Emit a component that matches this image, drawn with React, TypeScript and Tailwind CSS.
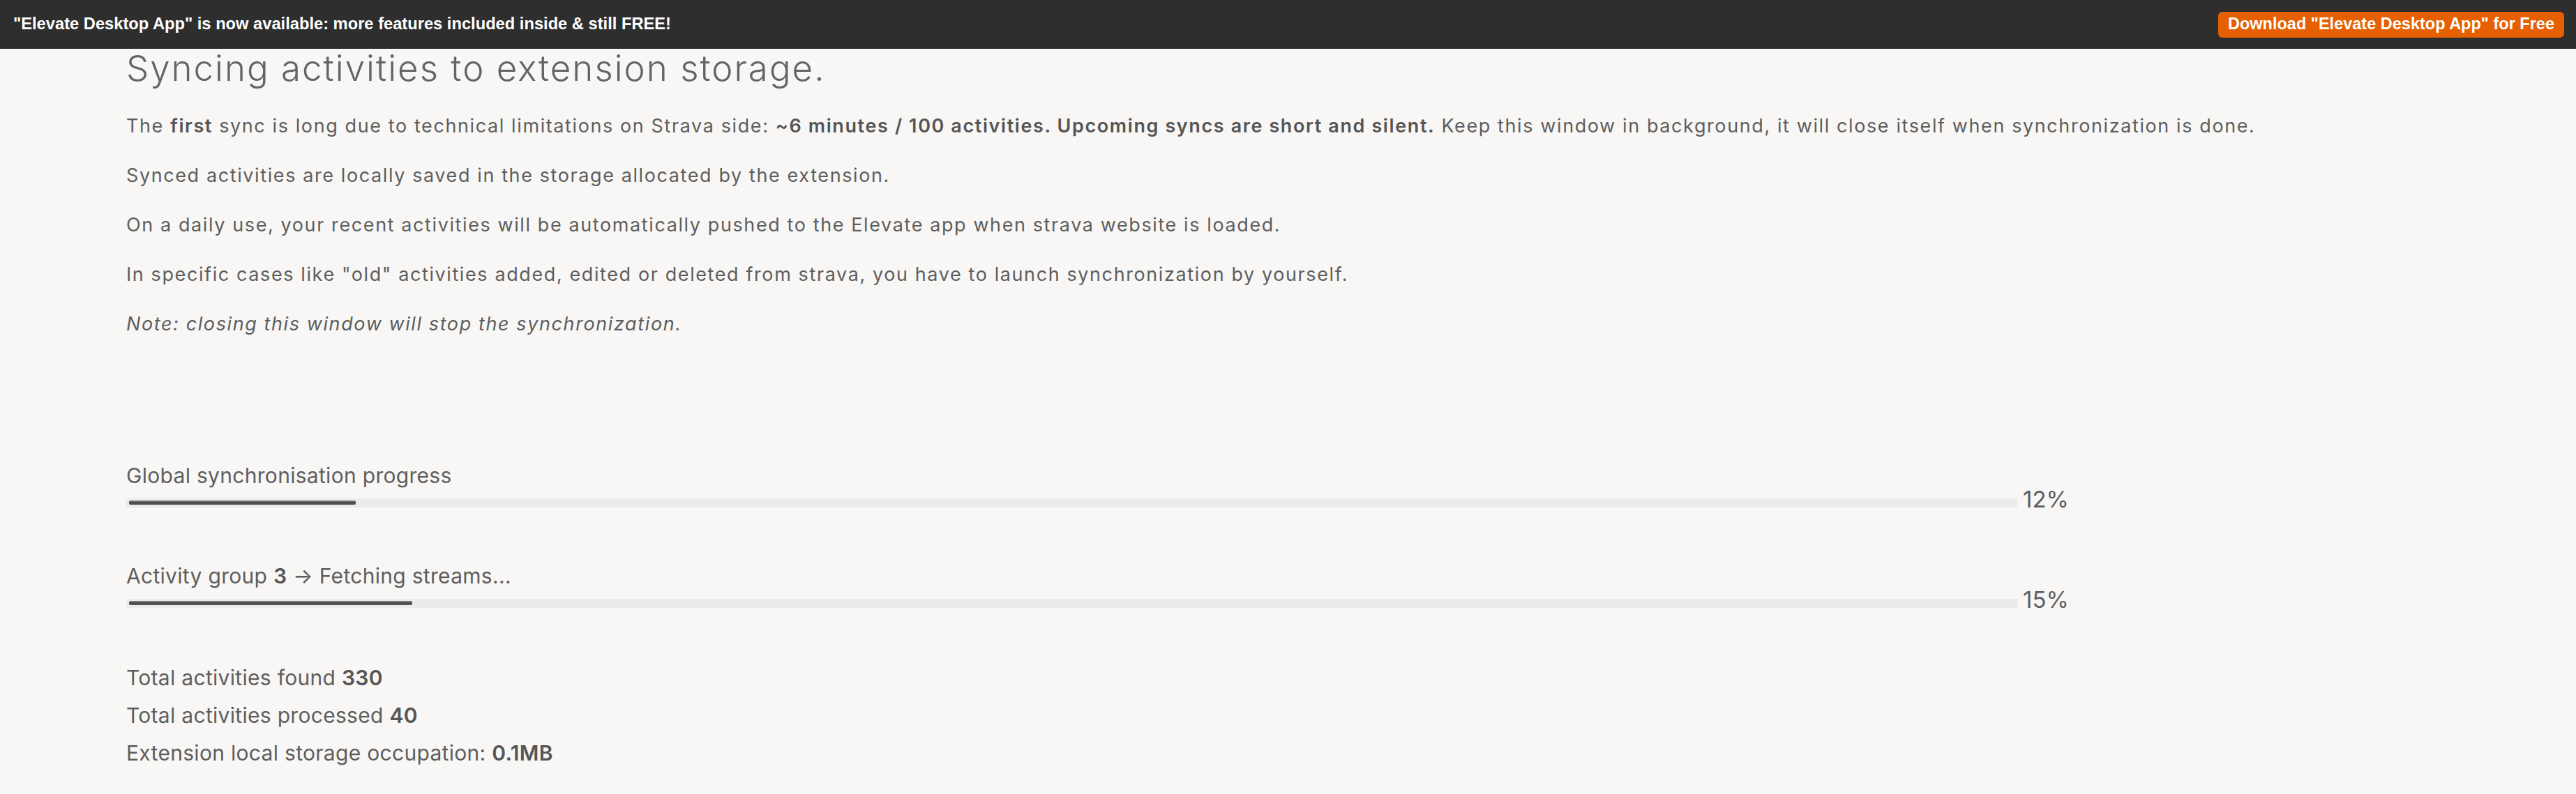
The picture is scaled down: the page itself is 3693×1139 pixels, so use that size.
const intro = [
  'Synced activities are locally saved in the storage allocated by the extension.',
  'On a daily use, your recent activities will be automatically pushed to the Elevate app when strava website is loaded.',
  'In specific cases like "old" activities added, edited or deleted from strava, you have to launch synchronization by yourself.',
];

function ProgressRow({ label, percent }: { label: React.ReactNode; percent: number }) {
  return (
    <div>
      <div className="text-[30px] leading-none tracking-[0.3px] text-[#5e5e5e]">{label}</div>
      <div className="mt-[18px] flex items-start">
        <div className="h-[13px] w-[2711px] bg-[#ebebeb] pl-[4px] pt-[3px]">
          <div
            className="h-[6px] rounded-[2px] bg-linear-to-b from-[#8a8a8a] via-[#474747] to-[#5c5c5c]"
            style={{ width: `${(percent / 100) * 2707}px` }}
          />
        </div>
        <span className="ml-[8px] mt-[-15px] text-[33px] leading-none text-[#5e5e5e]">{percent}%</span>
      </div>
    </div>
  );
}

export default function App() {
  return (
    <div className="min-h-screen bg-[#f8f7f5] font-['Inter',sans-serif]">
      <div className="flex h-[70px] items-center justify-between bg-[#2e2e2e] pl-[19px] pr-[17px] font-['Liberation_Sans',Arial,sans-serif]">
        <span className="text-[23.7px] font-bold text-white">
          "Elevate Desktop App" is now available: more features included inside &amp; still FREE!
        </span>
        <button className="h-[37px] rounded-[6px] bg-[#e65f00] px-[14px] text-[23.5px] font-bold text-white">
          Download "Elevate Desktop App" for Free
        </button>
      </div>

      <div className="pl-[181px]">
        <h1 className="mt-[2px] text-[51px] font-light leading-none tracking-[2px] text-[#646464]">
          Syncing activities to extension storage.
        </h1>

        <div className="mt-[22px] text-[27px] leading-[71px] tracking-[1.6px] text-[#5e5e5e]">
          <p>
            The <b className="font-semibold text-[#555]">first</b> sync is long due to technical limitations on Strava side:{' '}
            <b className="font-semibold text-[#555]">~6 minutes / 100 activities. Upcoming syncs are short and silent.</b> Keep
            this window in background, it will close itself when synchronization is done.
          </p>
          {intro.map((t) => (
            <p key={t}>{t}</p>
          ))}
          <p className="italic">Note: closing this window will stop the synchronization.</p>
        </div>

        <div className="mt-[167px]">
          <ProgressRow label="Global synchronisation progress" percent={12} />
        </div>
        <div className="mt-[78px]">
          <ProgressRow
            label={
              <>
                Activity group <b className="font-semibold text-[#555]">3</b> → Fetching streams...
              </>
            }
            percent={15}
          />
        </div>

        <div className="mt-[68px] text-[30px] leading-[54px] tracking-[0.3px] text-[#5e5e5e]">
          <div>
            Total activities found <b className="font-semibold text-[#555]">330</b>
          </div>
          <div>
            Total activities processed <b className="font-semibold text-[#555]">40</b>
          </div>
          <div>
            Extension local storage occupation: <b className="font-semibold text-[#555]">0.1MB</b>
          </div>
        </div>
      </div>
    </div>
  );
}
